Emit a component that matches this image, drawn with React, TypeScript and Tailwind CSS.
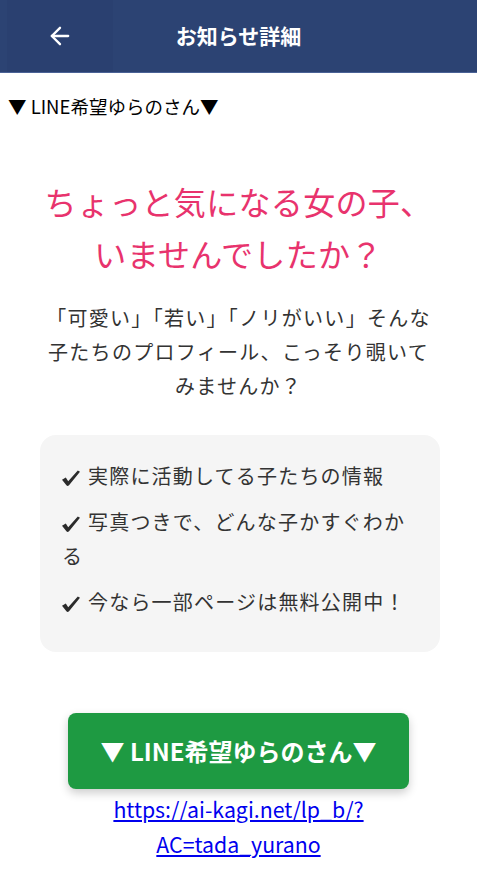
import { ArrowLeft } from 'lucide-react';

const font = { fontFamily: '"Noto Sans CJK JP", "Noto Sans", sans-serif' };

function Check() {
    return (
        <svg viewBox="0 0 18 16" className="mr-[8px] inline-block h-[16px] w-[18px] align-[-2px]" fill="#2b2b2b">
            <path d="M0 9.8 L3.8 7.6 L6.2 11.2 L15.8 0.6 L18 1.8 L7 15.3 Q5.6 16.6 4.4 15.3 Z" />
        </svg>
    );
}

export default function App() {
    return (
        <div className="min-h-[887px] bg-white" style={font}>
            {/* Header */}
            <header className="flex h-[73px] items-center border-b border-[#4a6296] bg-[#2c4373]">
                <button type="button" className="ml-[7px] flex h-full w-[106px] items-center justify-center bg-[#2a4070] text-white">
                    <ArrowLeft size={28} strokeWidth={2} />
                </button>
                <h1 className="flex-1 pr-[113px] text-center text-[21px] font-bold text-white">お知らせ詳細</h1>
            </header>

            <p className="px-2 pt-[21px] text-[18.5px] leading-6 text-black">▼ LINE希望ゆらのさん▼</p>

            {/* Headline */}
            <h2 className="mt-[57px] text-center text-[32px] leading-[52px] tracking-[0.01em] text-[#e8336d]">
                ちょっと気になる女の子、
                <br />
                いませんでしたか？
            </h2>

            <p className="mx-auto mt-[22px] w-[396px] text-center text-[20px] leading-[34px] tracking-[0.065em] text-[#333]">
                「可愛い」「若い」「ノリがいい」そんな子たちのプロフィール、こっそり覗いてみませんか？
            </p>

            {/* Feature box */}
            <ul className="ml-10 mt-[32px] w-[400px] rounded-2xl bg-[#f5f5f5] pl-[22px] pr-[26px] pt-6 pb-[33px] text-[20px] leading-[34px] tracking-[0.06em] text-[#333]">
                <li className="mb-3"><Check />実際に活動してる子たちの情報</li>
                <li className="mb-3"><Check />写真つきで、どんな子かすぐわかる</li>
                <li><Check />今なら一部ページは無料公開中！</li>
            </ul>

            {/* CTA */}
            <div className="mt-[61px] flex flex-col items-center">
                <a
                    href="#"
                    className="flex h-[76px] w-[341px] items-center justify-center rounded-lg bg-[#1e9a42] text-[24px] font-bold text-white shadow-[0_4px_10px_rgba(0,0,0,0.2)]"
                >
                    ▼ LINE希望ゆらのさん▼
                </a>
                <a href="#" className="mt-[2px] w-[300px] text-center text-[21.3px] leading-[35px] text-[#0000ee] underline">
                    https://ai-kagi.net/lp_b/?AC=tada_yurano
                </a>
            </div>
        </div>
    );
}
